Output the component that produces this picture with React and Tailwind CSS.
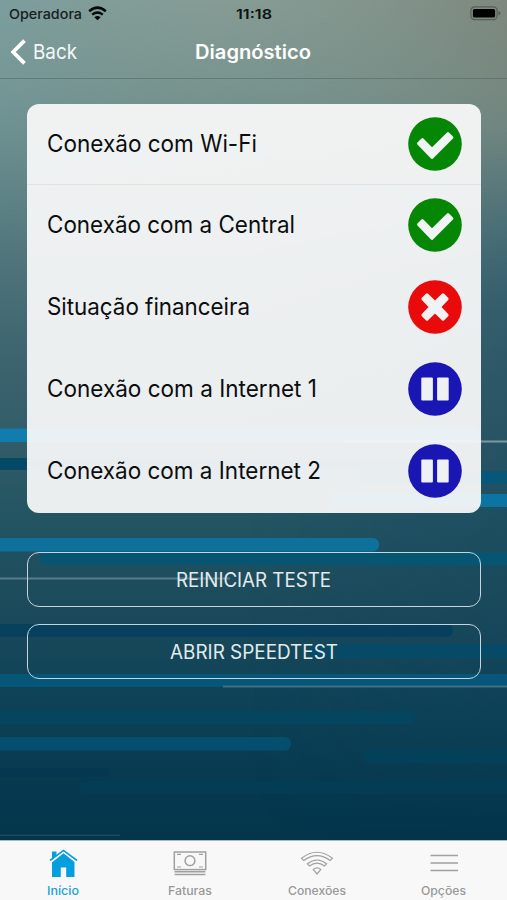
import React from "react";

const tests = [
  { name: "Conexão com Wi-Fi", status: "ok", width: 210 },
  { name: "Conexão com a Central", status: "ok", width: 248 },
  { name: "Situação financeira", status: "error", width: 203 },
  { name: "Conexão com a Internet 1", status: "paused", width: 270 },
  { name: "Conexão com a Internet 2", status: "paused", width: 274 },
];

function StatusIcon({ status }) {
  if (status === "ok") {
    return (
      <svg width="54" height="54" viewBox="-27 -27 54 54">
        <circle r="26.8" fill="#058605" />
        <path
          d="M-16.6 -.5L-12.6 -4.5L-3 5.2L13 -10.6L17 -6.6L-3 13.6Z"
          fill="#f1f4f4"
          stroke="#f1f4f4"
          strokeWidth="2.8"
          strokeLinejoin="round"
        />
      </svg>
    );
  }
  if (status === "error") {
    return (
      <svg width="54" height="54" viewBox="-27 -27 54 54">
        <circle r="26.8" fill="#e90b0b" />
        <path
          d="M-8 -12L0 -4.4L8 -12L12 -8L4.4 0L12 8L8 12L0 4.4L-8 12L-12 8L-4.4 0L-12 -8Z"
          fill="#f1f2f2"
          stroke="#f1f2f2"
          strokeWidth="3.2"
          strokeLinejoin="round"
        />
      </svg>
    );
  }
  return (
    <svg width="54" height="54" viewBox="-27 -27 54 54">
      <circle r="26.8" fill="#1916b3" />
      <rect x="-13.7" y="-11.5" width="11.6" height="23" rx="1" fill="#eef0f3" />
      <rect x="2.1" y="-11.5" width="11.6" height="23" rx="1" fill="#eef0f3" />
    </svg>
  );
}

// svg text keeps the label at a fixed length whatever the font is
function Label({ children, width, height, size, weight = 400, fill }) {
  return (
    <svg width={width} height={height} className="block overflow-visible">
      <text
        x="0"
        y={height / 2 + size * 0.36}
        textLength={width}
        lengthAdjust="spacingAndGlyphs"
        fontFamily="Inter, 'Liberation Sans', sans-serif"
        fontSize={size}
        fontWeight={weight}
        fill={fill}
      >
        {children}
      </text>
    </svg>
  );
}

function Background() {
  return (
    <svg
      className="absolute inset-0"
      width="507"
      height="900"
      viewBox="0 0 507 900"
    >
      <defs>
        <linearGradient id="base" x1="0" y1="0" x2="0" y2="900" gradientUnits="userSpaceOnUse">
          <stop offset="0" stopColor="#869d97" />
          <stop offset=".1" stopColor="#76938f" />
          <stop offset=".22" stopColor="#5c7f82" />
          <stop offset=".34" stopColor="#466c75" />
          <stop offset=".42" stopColor="#39626d" />
          <stop offset=".5" stopColor="#305b67" />
          <stop offset=".58" stopColor="#225462" />
          <stop offset=".68" stopColor="#1b4a5b" />
          <stop offset=".78" stopColor="#0e4257" />
          <stop offset=".88" stopColor="#06394f" />
          <stop offset=".94" stopColor="#03344a" />
        </linearGradient>
        <linearGradient id="glow" x1="0" y1="0" x2="507" y2="0" gradientUnits="userSpaceOnUse">
          <stop offset="0" stopColor="#6f9fa6" stopOpacity=".45" />
          <stop offset=".45" stopColor="#85978c" stopOpacity=".2" />
          <stop offset="1" stopColor="#77796b" stopOpacity=".6" />
        </linearGradient>
        <linearGradient id="fade" x1="0" y1="0" x2="0" y2="260" gradientUnits="userSpaceOnUse">
          <stop offset="0" stopColor="#fff" />
          <stop offset=".4" stopColor="#aaa" />
          <stop offset="1" stopColor="#000" />
        </linearGradient>
        <linearGradient id="shade" x1="250" y1="0" x2="507" y2="0" gradientUnits="userSpaceOnUse">
          <stop offset="0" stopColor="#12435c" stopOpacity="0" />
          <stop offset="1" stopColor="#12435c" stopOpacity=".35" />
        </linearGradient>
        <linearGradient id="shadeFade" x1="0" y1="130" x2="0" y2="840" gradientUnits="userSpaceOnUse">
          <stop offset="0" stopColor="#000" />
          <stop offset=".25" stopColor="#fff" />
          <stop offset=".6" stopColor="#ddd" />
          <stop offset="1" stopColor="#000" />
        </linearGradient>
        <mask id="top">
          <rect width="507" height="260" fill="url(#fade)" />
        </mask>
        <mask id="side">
          <rect y="130" width="507" height="710" fill="url(#shadeFade)" />
        </mask>
      </defs>
      <rect width="507" height="900" fill="url(#base)" />
      <rect width="507" height="260" fill="url(#glow)" mask="url(#top)" />
      <rect y="130" width="507" height="710" fill="url(#shade)" mask="url(#side)" />
      <rect x="-10" y="428.5" width="490" height="13.5" rx="6" fill="#117dae" />
      <rect x="-10" y="458" width="420" height="12" rx="6" fill="#054967" />
      <rect x="345" y="440.5" width="170" height="2" fill="#7999a3" />
      <rect x="360" y="471" width="160" height="13" rx="6" fill="#075779" />
      <rect x="330" y="494" width="190" height="13" rx="6" fill="#0b74a3" />
      <rect x="-10" y="538" width="389" height="13.5" rx="6" fill="#0d719c" />
      <rect x="40" y="552" width="480" height="13" rx="6" fill="#055573" />
      <rect x="0" y="577.5" width="230" height="2" fill="#6b8e9b" opacity=".75" />
      <rect x="-10" y="624" width="463" height="13" rx="6" fill="#033f5e" opacity=".85" />
      <rect x="310" y="644" width="210" height="14" rx="6" fill="#034b6b" opacity=".85" />
      <rect x="-10" y="674" width="530" height="13" fill="#055678" />
      <rect x="223" y="685.5" width="290" height="2" fill="#426f83" />
      <rect x="-10" y="711" width="425" height="13" rx="6" fill="#024763" opacity=".8" />
      <rect x="-10" y="737" width="301" height="13.5" rx="6" fill="#044f6d" />
      <rect x="363" y="750" width="160" height="13" rx="6" fill="#02415d" opacity=".8" />
      <rect x="-10" y="768" width="120" height="9" rx="4" fill="#02364f" opacity=".5" />
      <rect x="80" y="781" width="440" height="13" rx="6" fill="#023f59" opacity=".6" />
      <rect x="0" y="834.5" width="120" height="1.5" fill="#1a4a5f" />
    </svg>
  );
}

function StatusBar() {
  return (
    <div className="grid h-[27px] grid-cols-3 items-center pl-[9px] pr-[6px]">
      <div className="flex items-center gap-[6px]">
        <Label width={73} height={18} size={13.5} weight={500} fill="#17211f">
          Operadora
        </Label>
        <svg width="19" height="15" viewBox="0 0 19 15" fill="none" stroke="#050808" strokeWidth="2.5">
          <path d="M1.2 5.2Q9.5 -1.9 17.8 5.2" />
          <path d="M4.2 8.6Q9.5 4.3 14.8 8.6" />
          <path d="M6.4 11.2Q9.5 8.9 12.6 11.2L9.5 14.3Z" fill="#050808" stroke="none" />
        </svg>
      </div>
      <div className="flex justify-center pr-[2px]">
        <Label width={36} height={18} size={13.5} weight={600} fill="#0b1211">
          11:18
        </Label>
      </div>
      <div className="flex justify-end">
        <svg width="31" height="15" viewBox="0 0 31 15">
          <rect x=".9" y=".9" width="26.2" height="12.7" rx="3.6" fill="none" stroke="#555f59" strokeWidth="1.2" />
          <rect x="2.9" y="2.9" width="22.2" height="8.7" rx="1.6" fill="#000" />
          <path d="M28.5 5Q30.5 5.6 30.5 7.2T28.5 9.5Z" fill="#555f59" />
        </svg>
      </div>
    </div>
  );
}

function NavBar() {
  return (
    <div className="grid h-[52px] grid-cols-3 items-center border-b border-[#536b69]/60 px-[10px] pb-[2px]">
      <div className="flex items-center gap-[6px]">
        <svg width="17" height="26" viewBox="0 0 17 26" fill="none" stroke="#fff" strokeWidth="3.8">
          <path d="M14.5 1.7L3.2 13L14.5 24.3" />
        </svg>
        <Label width={44} height={26} size={20.5} fill="#f4f8f7">
          Back
        </Label>
      </div>
      <div className="flex justify-center">
        <Label width={116} height={26} size={19.5} weight={600} fill="#fff">
          Diagnóstico
        </Label>
      </div>
    </div>
  );
}

function OutlineButton({ children, width }) {
  return (
    <button className="flex h-[55px] w-full items-center justify-center rounded-xl border-[1.5px] border-[#c4d6dc]">
      <Label width={width} height={26} size={19.5} fill="#e2ebee">
        {children}
      </Label>
    </button>
  );
}

function Tab({ name, width, active, children }) {
  return (
    <div className="flex flex-1 flex-col items-center pt-[8px]">
      <svg width="36" height="30" viewBox="0 0 36 30" fill="none" stroke="#a0a0a0" strokeWidth="1.2">
        {children}
      </svg>
      <div className="mt-[4px]">
        <Label width={width} height={16} size={11.8} weight={500} fill={active ? "#17a0dc" : "#999999"}>
          {name}
        </Label>
      </div>
    </div>
  );
}

function TabBar() {
  return (
    <div className="flex h-[60px] border-t border-[#a9b9c0] bg-[#f8f8f8]">
      <Tab name="Início" width={32} active>
        <path d="M7.5 13L18.5 4L29.5 13V28H21.2V18.5H15.8V28H7V13Z" fill="#069fdd" stroke="none" />
        <path d="M7 11V2.5H11.5V7Z" fill="#069fdd" stroke="none" />
        <path d="M5 11.5L18.5 1.5L32 11.5" stroke="#069fdd" strokeWidth="1.6" />
        <path d="M5.5 13.2L18.5 3.4L31.5 13.2" stroke="#f8f8f8" strokeWidth="1.1" />
      </Tab>
      <Tab name="Faturas" width={44}>
        <rect x="2.3" y="3" width="31.4" height="17.6" strokeWidth="1.5" />
        <circle cx="18" cy="11.7" r="4.9" strokeWidth="1.5" />
        <path d="M5 5.4H9M27 5.4H31M5 18H9M27 18H31" />
        <path d="M2.6 22.8H33.4M2.6 25.4H33.4" strokeWidth="1.5" />
      </Tab>
      <Tab name="Conexões" width={58}>
        <path d="M2.6 9.3Q18 -2.8 33.4 9.3L31.2 11.5Q18 1.6 4.8 11.5Z" />
        <path d="M8.4 14.8Q18 7.2 27.6 14.8L25.4 17Q18 11.4 10.6 17Z" />
        <path d="M14.2 20.4Q18 17.4 21.8 20.4L18 25Z" />
      </Tab>
      <Tab name="Opções" width={45}>
        <path d="M4.5 6.5H32M4.5 14H32M4.5 21.5H32" strokeWidth="1.5" />
      </Tab>
    </div>
  );
}

function App() {
  return (
    <div className="relative h-[900px] w-[507px] overflow-hidden bg-[#03344a]">
      <Background />
      <div className="relative flex h-full flex-col">
        <StatusBar />
        <NavBar />
        <main className="flex-1 pl-[26.5px] pr-[26px] pt-[25px]">
          <div className="overflow-hidden rounded-xl bg-[#fafafa]/93">
            {tests.map((test, i) => (
              <div
                key={test.name}
                className={
                  i === 0
                    ? "flex h-[81px] items-center justify-between border-b border-[#dfe3e3] pb-px pl-[20px] pr-[19.5px]"
                    : "flex h-[82px] items-center justify-between pb-[2px] pl-[20px] pr-[19.5px]"
                }
              >
                <div className="pb-[2px]">
                  <Label width={test.width} height={30} size={23.7} fill="#0c0d0e">
                    {test.name}
                  </Label>
                </div>
                <StatusIcon status={test.status} />
              </div>
            ))}
          </div>
          <div className="mt-[39px] flex flex-col gap-[17px]">
            <OutlineButton width={155}>REINICIAR TESTE</OutlineButton>
            <OutlineButton width={168}>ABRIR SPEEDTEST</OutlineButton>
          </div>
        </main>
        <TabBar />
      </div>
    </div>
  );
}

export default App;
